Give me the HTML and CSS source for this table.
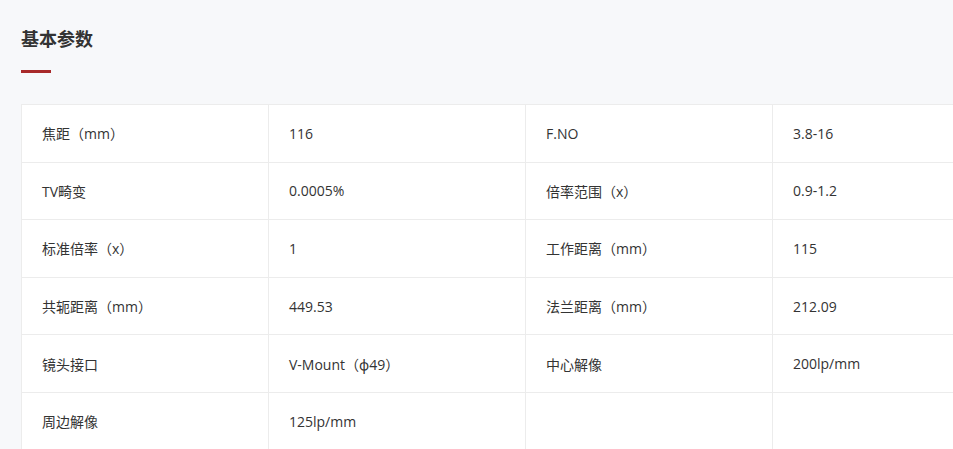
FILE: index.html
```html
<!DOCTYPE html>
<html lang="zh-CN">
<head>
<meta charset="utf-8">
<title>基本参数</title>
<link rel="stylesheet" href="styles.css">
</head>
<body>
<section class="params">
  <h2 class="params-title">基本参数</h2>
  <div class="params-bar"></div>
  <table class="params-table">
    <colgroup>
      <col class="col-label"><col class="col-value"><col class="col-label"><col class="col-value">
    </colgroup>
    <tbody>
      <tr><td>焦距（mm）</td><td>116</td><td>F.NO</td><td>3.8-16</td></tr>
      <tr><td>TV畸变</td><td>0.0005%</td><td>倍率范围（x）</td><td>0.9-1.2</td></tr>
      <tr><td>标准倍率（x）</td><td>1</td><td>工作距离（mm）</td><td>115</td></tr>
      <tr><td>共轭距离（mm）</td><td>449.53</td><td>法兰距离（mm）</td><td>212.09</td></tr>
      <tr><td>镜头接口</td><td>V-Mount（<span class="greek">φ</span>49）</td><td>中心解像</td><td>200lp/mm</td></tr>
      <tr><td>周边解像</td><td>125lp/mm</td><td></td><td></td></tr>
    </tbody>
  </table>
</section>
</body>
</html>
```
FILE: styles.css
```css
html, body {
  margin: 0;
  padding: 0;
  background: #f7f8fa;
  overflow: hidden;
}
body {
  font-family: "Open Sans", "Noto Sans CJK SC", sans-serif;
  color: #333;
  text-spacing-trim: space-all;
  text-autospace: no-autospace;
}
.params {
  padding: 24px 0 0 21px;
}
.params-title {
  margin: 0;
  font-family: "Noto Sans CJK SC", sans-serif;
  font-size: 18px;
  line-height: 28px;
  font-weight: 700;
  color: #333;
}
.params-bar {
  width: 30px;
  height: 3px;
  background: #a8292a;
  margin-top: 18px;
}
.params-table {
  margin-top: 31px;
  border-collapse: collapse;
  table-layout: fixed;
  width: 1008px;
  background: #fff;
}
.col-label { width: 247px; }
.col-value { width: 257px; }
.params-table td {
  border: 1px solid #ececec;
  height: 57.6px;
  padding: 0 0 0 20px;
  font-size: 14px;
  color: #333;
  text-align: left;
  white-space: nowrap;
  vertical-align: middle;
  box-sizing: border-box;
}
.greek { font-family: "Noto Sans", sans-serif; }
```
